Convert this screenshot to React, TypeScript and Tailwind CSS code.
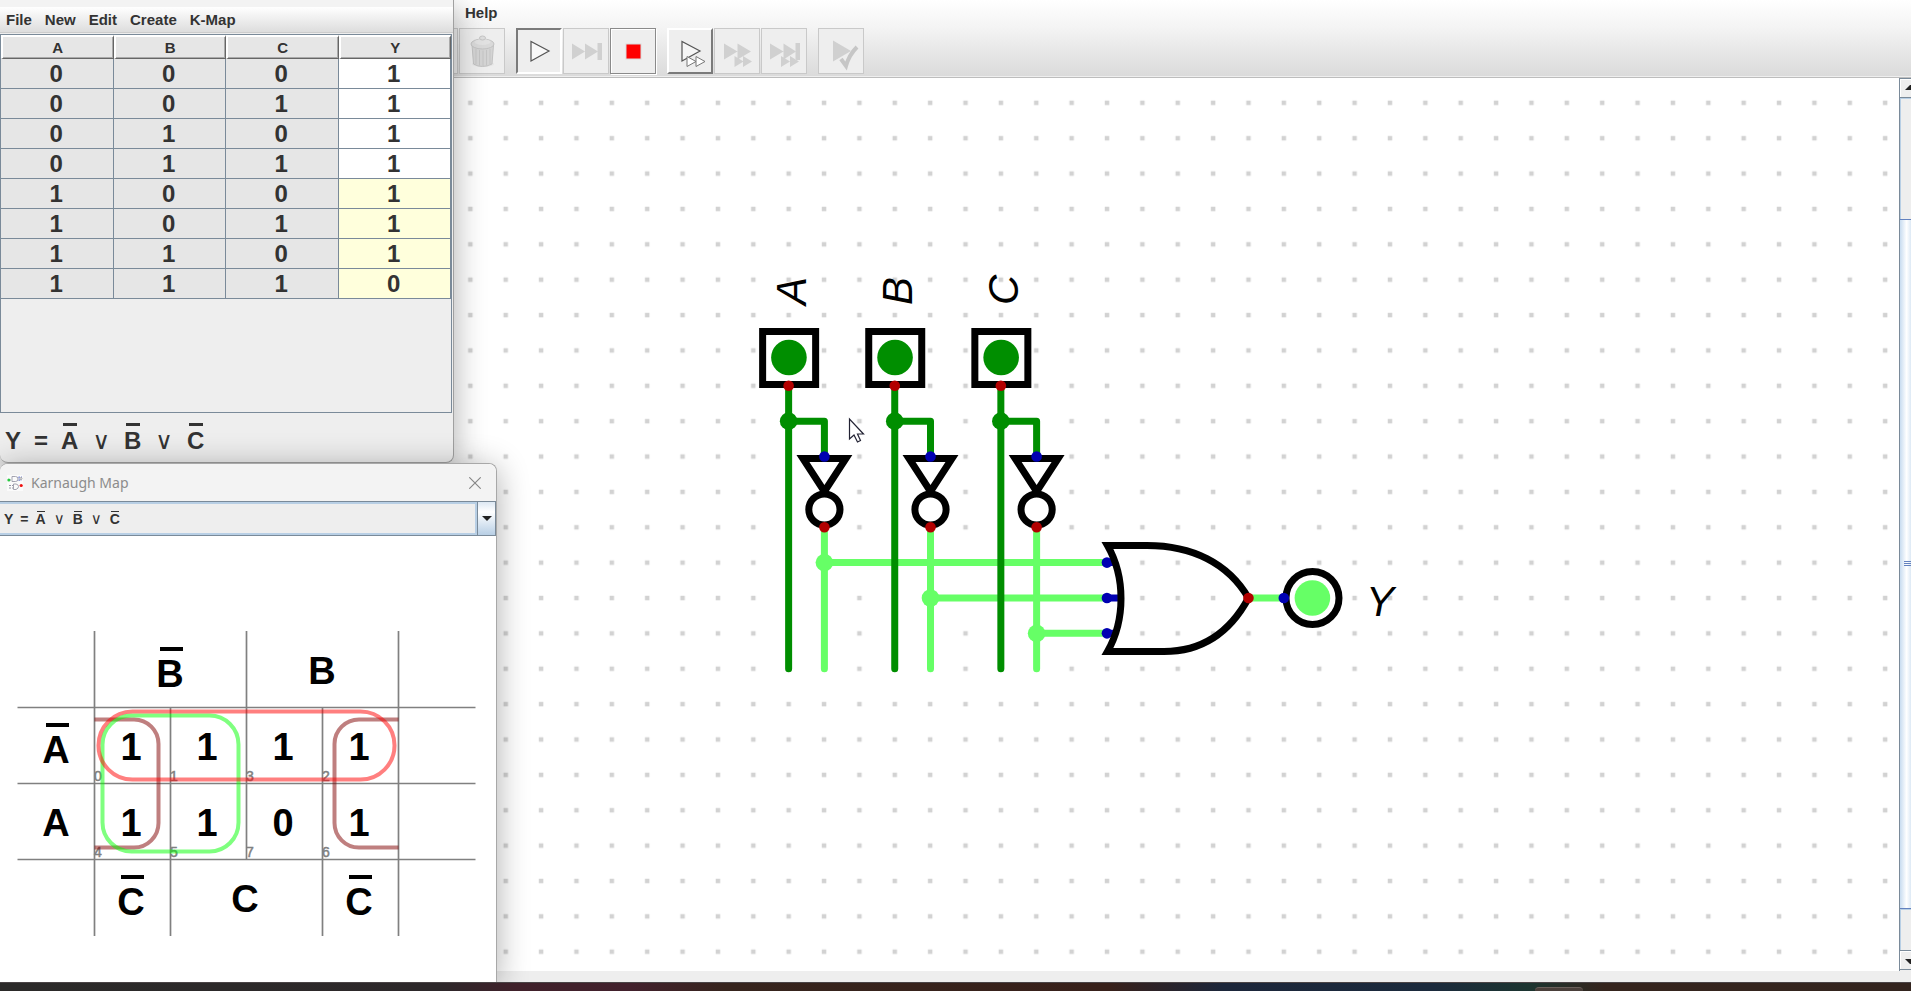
import type { ReactNode } from "react";

const SANS = "font-['Liberation_Sans',Arial,sans-serif]";

const COLUMNS = ["A", "B", "C", "Y"];

const ROWS = [
  [0, 0, 0, 1],
  [0, 0, 1, 1],
  [0, 1, 0, 1],
  [0, 1, 1, 1],
  [1, 0, 0, 1],
  [1, 0, 1, 1],
  [1, 1, 0, 1],
  [1, 1, 1, 0],
];

/* ---------- Toolbar ---------- */

type ToolKind = "flat" | "pressed" | "raised" | "framed";

const TOOL_STYLES: Record<ToolKind, string> = {
  flat: "border border-[#c9c9c9]",
  pressed: "border-2 border-t-[#7a7a7a] border-l-[#7a7a7a] border-r-white border-b-white",
  raised: "border-2 border-t-white border-l-white border-r-[#7a7a7a] border-b-[#7a7a7a]",
  framed: "border border-[#8a8a8a] shadow-[1px_1px_0_#ffffff,inset_1px_1px_0_#ffffff]",
};

function Tool({ label, kind = "flat", children }: { label: string; kind?: ToolKind; children?: ReactNode }) {
  return (
    <button
      type="button"
      aria-label={label}
      className={`flex size-[46px] shrink-0 items-center justify-center bg-[#eeeeee] ${TOOL_STYLES[kind]}`}
    >
      <svg viewBox="0 0 42 42" className="size-[42px] shrink-0" aria-hidden="true">
        {children}
      </svg>
    </button>
  );
}

const GRAY = "#d0d0d0";

function TrashIcon() {
  return (
    <g>
      <ellipse cx="22" cy="34" rx="11" ry="3" fill="#e4e4e4" />
      <path d="M11 15 L12.5 34 Q21 39 31 34 L32.500 15 Z" fill="#d4d4d4" stroke="#c2c2c2" strokeWidth="1" />
      <path d="M15 19V34M18.500 20V35.500M22 20.500V36M25.500 20V35.500M29 19V34" stroke="#c4c4c4" strokeWidth="1" />
      <ellipse cx="21.500" cy="14" rx="11.500" ry="5" fill="#d9d9d9" stroke="#c2c2c2" strokeWidth="1" />
      <ellipse cx="21.500" cy="12" rx="8" ry="3" fill="#e2e2e2" />
      <ellipse cx="21.500" cy="8" rx="3" ry="2" fill="#dedede" stroke="#c4c4c4" strokeWidth="1" />
    </g>
  );
}

/* ---------- Truth table window ---------- */

function Bar({ children, small }: { children: string; small?: boolean }) {
  return (
    <span className={`flex flex-col items-center ${small ? "gap-0.5" : "gap-1.5"}`}>
      <span className={small ? "h-px w-2 bg-[#333333]" : "h-[3px] w-3.5 bg-[#333333]"} />
      <span>{children}</span>
    </span>
  );
}

function Formula({ small }: { small?: boolean }) {
  const or = (
    <span className={`font-['DejaVu_Sans',sans-serif] font-normal ${small ? "text-[15px] leading-[11px]" : "text-2xl leading-[18px]"}`}>
      ∨
    </span>
  );
  return (
    <span
      className={`flex items-end font-bold text-[#333333] ${
        small ? "gap-2 text-sm leading-[11px]" : "gap-3.5 text-2xl leading-[18px]"
      }`}
    >
      <span className={`flex items-end ${small ? "gap-[7px]" : "gap-[13px]"}`}>
        <span>Y</span>
        <span>=</span>
        <Bar small={small}>A</Bar>
      </span>
      {or}
      <Bar small={small}>B</Bar>
      {or}
      <Bar small={small}>C</Bar>
    </span>
  );
}

function TruthTableWindow() {
  return (
    <section
      aria-label="Table"
      className="absolute top-0 left-0 flex h-[463px] w-[454px] flex-col rounded-b-lg border-r border-b border-[#a0a0a0] bg-[#eeeeee] shadow-[0_8px_32px_rgba(0,0,0,0.32)]"
    >
      <div className="h-[7px] bg-[#f3f3f3]" />
      <nav className="flex h-[26px] items-center gap-[13px] border-b border-[#cccccc] bg-linear-to-b from-white to-[#dddddd] pt-0.5 pl-1.5 text-[15px] font-bold text-[#333333]">
        {["File", "New", "Edit", "Create", "K-Map"].map((item) => (
          <button type="button" key={item}>
            {item}
          </button>
        ))}
      </nav>
      <div className="mt-px mr-px h-[379px] border border-[#7a8a99]">
        <table className="w-full table-fixed border-separate border-spacing-0 text-center font-bold text-[#333333]">
          <thead>
            <tr>
              {COLUMNS.map((c) => (
                <th
                  key={c}
                  className="h-6 border-t-2 border-r border-b border-l-2 border-t-white border-r-[#666666] border-b-[#666666] border-l-white bg-[#e6e6e6] p-0 text-[15px] leading-5 shadow-[inset_-1px_-1px_0_#aaaaaa]"
                >
                  {c}
                </th>
              ))}
            </tr>
          </thead>
          <tbody>
            {ROWS.map((row, r) => (
              <tr key={r}>
                {row.map((v, c) => (
                  <td
                    key={c}
                    className={`h-[30px] border-r border-b border-[#7a8a99] py-0 pr-px pl-0 text-2xl leading-7 ${
                      c < 3 ? "bg-[#e6e6e6]" : r < 4 ? "bg-white" : "bg-[#ffffdc]"
                    }`}
                  >
                    {v}
                  </td>
                ))}
              </tr>
            ))}
          </tbody>
        </table>
      </div>
      <div className="flex flex-1 items-end pb-3 pl-[5px]">
        <Formula />
      </div>
    </section>
  );
}

/* ---------- Karnaugh map window ---------- */

function KMapLabel({ x, y, children, bar }: { x: number; y: number; children: string; bar?: boolean }) {
  return (
    <g>
      {bar && <rect x={x - 10} y={y - 40} width="23" height="4" />}
      <text x={x} y={y} textAnchor="middle" fontSize="38" fontWeight="bold">
        {children}
      </text>
    </g>
  );
}

const CELLS = [
  ["1", "1", "1", "1"],
  ["1", "1", "0", "1"],
];
const CELL_INDEX = [
  ["0", "1", "3", "2"],
  ["4", "5", "7", "6"],
];

function KarnaughDrawing() {
  return (
    <svg className={`block h-[440px] w-[490px] ${SANS}`} viewBox="0 536 490 440" role="img" aria-label="Karnaugh map">
      <path
        d="M94.500 631V936M398.500 631V936M246.500 631V859.500M170.500 707.500V936M322.500 707.500V936M17.500 707.500H475.500M17.500 783.500H475.500M17.500 859.500H475.500"
        stroke="#808080"
        strokeWidth="1.700"
        fill="none"
      />
      {CELLS.map((row, r) =>
        row.map((v, c) => (
          <g key={`${r}${c}`}>
            <text x={131 + c * 76} y={760 + r * 76} textAnchor="middle" fontSize="38" fontWeight="bold">
              {v}
            </text>
            <text x={94 + c * 76} y={781 + r * 76} fontSize="14" fill="#808080" stroke="#808080" strokeWidth="0.500">
              {CELL_INDEX[r][c]}
            </text>
          </g>
        )),
      )}
      <KMapLabel x={170} y={687} bar>B</KMapLabel>
      <KMapLabel x={322} y={684}>B</KMapLabel>
      <KMapLabel x={56} y={763} bar>A</KMapLabel>
      <KMapLabel x={56} y={836}>A</KMapLabel>
      <KMapLabel x={131} y={915} bar>C</KMapLabel>
      <KMapLabel x={245} y={912}>C</KMapLabel>
      <KMapLabel x={359} y={915} bar>C</KMapLabel>
      <g fill="none" strokeWidth="4">
        <path
          d="M94.500 719.500H134A24.500 24.500 0 0 1 158.500 744V823A24.500 24.500 0 0 1 134 847.500H94.500M398.500 719.500H359A24.500 24.500 0 0 0 334.500 744V823A24.500 24.500 0 0 0 359 847.500H398.500"
          stroke="#800000"
          strokeOpacity="0.5"
        />
        <rect x="102.500" y="715.500" width="136" height="136" rx="29" stroke="#00ff00" strokeOpacity="0.5" />
        <rect x="98.500" y="711.500" width="296" height="68" rx="34" stroke="#ff0000" strokeOpacity="0.5" />
      </g>
    </svg>
  );
}

function AppIcon() {
  return (
    <svg viewBox="0 0 16 16" className="size-4" fill="none" aria-hidden="true">
      <rect width="16" height="16" fill="#fbfbfb" />
      <path d="M5 1.500H8.500Q11 1.500 11 4T8.500 6.500H5ZM6.500 9H9Q11.500 9.500 11.500 11.500T9 14.500H6.500Z" stroke="#9a9aa8" strokeWidth="0.900" />
      <path d="M2 5H5M2 10.500H6M2 13H6" stroke="#8a8a9a" strokeWidth="0.900" strokeDasharray="2 1" />
      <path d="M11.500 2H15M12 5H15M12 2V7" stroke="#6a78d0" strokeWidth="0.900" strokeDasharray="1.500 1" />
      <circle cx="1.800" cy="5" r="1.500" fill="#28c840" />
      <circle cx="14.200" cy="10.500" r="1.600" fill="#ee1010" />
      <circle cx="14" cy="3.500" r="1" stroke="#888" strokeWidth="0.700" />
    </svg>
  );
}

function KarnaughWindow() {
  return (
    <section
      aria-label="Karnaugh Map"
      className="absolute top-[463px] bottom-0 left-0 flex w-[497px] flex-col overflow-visible rounded-t-lg border-t border-r border-[#a8a8a8] bg-white shadow-[0_4px_32px_rgba(0,0,0,0.32)]"
    >
      <header className="flex h-[37px] shrink-0 items-center gap-2 rounded-t-lg bg-[#f3f3f3] pr-[15px] pl-[7px]">
        <AppIcon />
        <h1 className="flex-1 font-['Noto_Sans','Open_Sans',sans-serif] text-sm text-[#8c8c8c]">Karnaugh Map</h1>
        <button type="button" aria-label="Close">
          <svg viewBox="0 0 12 12" className="size-3" aria-hidden="true">
            <path d="M0.300 0.300L11.700 11.700M11.700 0.300L0.300 11.700" stroke="#858585" strokeWidth="1.100" />
          </svg>
        </button>
      </header>
      <div className="relative flex h-[35px] shrink-0 border-y border-r border-[#7a8a99] bg-[#eeeeee]">
        <label htmlFor="expression" className="pointer-events-none absolute bottom-[10px] left-1">
          <Formula small />
        </label>
        <select
          id="expression"
          className="min-w-0 flex-1 appearance-none border-2 border-l-0 border-[#b8cfe5] bg-transparent"
        >
          <option value="y" />
        </select>
        <span
          aria-hidden="true"
          className="pointer-events-none flex w-[18px] items-center justify-center border-l border-[#7a8a99] bg-linear-to-b from-[#dde8f3] via-white via-30% to-[#b8cfe5]"
        >
          <svg viewBox="0 0 10 5" className="h-[5px] w-2.5">
            <path d="M0 0H10L5 5Z" fill="#222222" />
          </svg>
        </span>
      </div>
      <KarnaughDrawing />
    </section>
  );
}

/* ---------- Circuit ---------- */

const GRID = 35.37;
const LEFT = 470.3;
const TOP = 24.8;
const gx = (n: number) => LEFT + n * GRID;
const gy = (n: number) => TOP + n * GRID;

const ON = "#66ff66";
const OFF = "#008e00";
const PIN_OUT = "#b20000";
const PIN_IN = "#0000b2";

const INPUTS = [
  { name: "A", col: 9, tap: 13 },
  { name: "B", col: 12, tap: 14 },
  { name: "C", col: 15, tap: 15 },
];

function Circuit() {
  return (
    <svg className={`block size-full ${SANS}`} role="img" aria-label="Circuit">
      <defs>
        <pattern
          id="grid"
          width={GRID}
          height={GRID}
          patternUnits="userSpaceOnUse"
          patternTransform={`translate(${LEFT - GRID / 2} ${TOP - GRID / 2})`}
        >
          <rect x={GRID / 2 - 2.2} y={GRID / 2 - 2.2} width="4.500" height="4.500" fill="#d2d2d2" />
        </pattern>
      </defs>
      <rect width="100%" height="100%" fill="url(#grid)" />

      <g fill="none" strokeWidth="7" strokeLinecap="round" strokeLinejoin="round">
        {INPUTS.map(({ name, col, tap }) => (
          <path
            key={name}
            stroke={ON}
            d={`M${gx(col + 1) + 0.4} ${gy(12)}V${gy(16)}M${gx(col + 1)} ${gy(tap)}H${gx(18)}`}
          />
        ))}
        <path stroke={ON} d={`M${gx(22)} ${gy(14)}H${gx(23)}`} />
        {INPUTS.map(({ name, col }) => (
          <path
            key={name}
            stroke={OFF}
            d={`M${gx(col)} ${gy(8)}V${gy(16)}M${gx(col)} ${gy(9)}H${gx(col + 1) + 0.4}V${gy(10)}`}
          />
        ))}
      </g>

      {INPUTS.map(({ name, col, tap }) => {
        const x = gx(col);
        const n = gx(col + 1) + 0.4;
        return (
          <g key={name}>
            <circle cx={x} cy={gy(9)} r="8.800" fill={OFF} />
            <circle cx={n} cy={gy(tap)} r="8.800" fill={ON} />
            <rect x={x - 26} y="253.500" width="53" height="53" fill="none" stroke="#000" strokeWidth="7" />
            <circle cx={x + 0.3} cy="279.500" r="17.800" fill={OFF} />
            <circle cx={x} cy={gy(8)} r="5.300" fill={PIN_OUT} />
            <path
              d={`M${n - 21.5} 380.500H${n + 21.5}L${n} 413.500Z`}
              fill="none"
              stroke="#000"
              strokeWidth="7"
              strokeLinejoin="miter"
            />
            <circle cx={n} cy="431.500" r="15.600" fill="#fff" stroke="#000" strokeWidth="7" />
            <circle cx={n} cy={gy(10)} r="5.300" fill={PIN_IN} />
            <circle cx={n} cy={gy(12)} r="5.300" fill={PIN_OUT} />
            <text transform={`translate(${x + 17.3} 227) rotate(-90)`} fontSize="42" fontStyle="italic">
              {name}
            </text>
          </g>
        );
      })}

      <g stroke={PIN_IN} strokeWidth="7">
        <path d={`M${gx(18)} ${gy(13)}h6M${gx(18)} ${gy(14)}h11M${gx(18)} ${gy(15)}h6`} />
      </g>
      <g fill={PIN_IN}>
        <circle cx={gx(18)} cy={gy(13)} r="5.300" />
        <circle cx={gx(18)} cy={gy(14)} r="5.300" />
        <circle cx={gx(18)} cy={gy(15)} r="5.300" />
      </g>
      <path
        d="M1107.500 467.500H1147C1192 467.500 1228 485 1248.500 520C1229 556 1200 573.500 1164 573.500H1107.500C1125.500 542 1125.500 499 1107.500 467.500Z"
        fill="none"
        stroke="#000"
        strokeWidth="7"
        strokeLinejoin="miter"
      />
      <circle cx={gx(22)} cy={gy(14)} r="5.300" fill={PIN_OUT} />
      <circle cx="1312.500" cy="520" r="26.500" fill="#fff" stroke="#000" strokeWidth="7" />
      <circle cx="1312.400" cy="520" r="17.800" fill={ON} />
      <circle cx={gx(23)} cy={gy(14)} r="5.300" fill={PIN_IN} />
      <text x="1366" y="538" fontSize="42" fontStyle="italic">
        Y
      </text>
      <path
        d="M849.500 341V361L854 357L857.500 364L860.500 362.500L857.500 356H863.500Z"
        fill="#fff"
        stroke="#222233"
        strokeWidth="1.200"
      />
    </svg>
  );
}

function ScrollBar() {
  return (
    <div aria-hidden="true" className="flex w-3 shrink-0 flex-col overflow-hidden border-l border-[#7a8a99] bg-[#eeeeee]">
      <div className="h-5 shrink-0 border-y border-[#7a8a99] bg-[#eeeeee] shadow-[inset_1px_1px_0_#ffffff]">
        <svg viewBox="0 0 11 18" className="h-[18px] w-[11px]">
          <path d="M5 11L10 6H11V11Z" fill="#222222" />
        </svg>
      </div>
      <div className="grow-[120] basis-0 border-t border-l border-[#b8cfe5]" />
      <div className="flex grow-[691] basis-0 items-center border-y border-[#6382bf] bg-linear-to-r from-[#c8dcf0] via-white via-60% to-[#dde9f5] pl-1 shadow-[-1px_0_0_#6382bf]">
        <div className="flex flex-1 flex-col gap-px">
          <span className="h-px bg-[#6382bf]" />
          <span className="h-px bg-[#6382bf]" />
          <span className="h-px bg-[#6382bf]" />
        </div>
      </div>
      <div className="grow-[40] basis-0 border-t border-l border-[#b8cfe5]" />
      <div className="h-5 shrink-0 border-y border-[#7a8a99] shadow-[inset_1px_1px_0_#ffffff]">
        <svg viewBox="0 0 11 18" className="h-[18px] w-[11px]">
          <path d="M5 8H11V13H10Z" fill="#222222" />
        </svg>
      </div>
      <div className="h-px shrink-0" />
    </div>
  );
}

function MainWindow() {
  return (
    <main className="flex min-h-0 flex-1 flex-col bg-white">
      <div className="flex h-[78px] shrink-0 flex-col border-b border-[#bdbdbd] bg-linear-to-b from-white via-[#f4f4f4] via-35% to-[#dadada]">
        <nav className="flex h-7 items-center pb-0.5 pl-[465px] text-[15px] font-bold text-[#333333]">
          <button type="button">Help</button>
        </nav>
        <div className="flex flex-1 items-start gap-[11px] border-b border-[#eeeeee] pl-[412px]">
          <div className="flex gap-px">
            <Tool label="Redo" />
            <Tool label="Delete">
              <TrashIcon />
            </Tool>
          </div>
          <div className="flex gap-px">
            <Tool label="Start simulation" kind="pressed">
              <path d="M13 11.500V31L31 21Z" fill="#f8f8f8" stroke="#555" strokeWidth="1.200" />
            </Tool>
            <Tool label="Single gate step">
              <path d="M7 13.500V29.500L20 21.500ZM20 13.500V29.500L33 21.500ZM32.500 13H37V30H32.500Z" fill={GRAY} />
            </Tool>
            <Tool label="Stop simulation" kind="framed">
              <rect x="13.500" y="13.500" width="16" height="16" fill="#d9d9d9" />
              <rect x="14.500" y="14.500" width="14" height="14" fill="#ff0000" />
            </Tool>
          </div>
          <div className="flex gap-px">
            <Tool label="Run fast" kind="raised">
              <path d="M13 11.500V31L31 21Z" fill="#f6f6f6" stroke="#555" strokeWidth="1.200" />
              <path d="M18 26.500V36.500L27 31.500ZM27 26.500V36.500L36 31.500Z" fill="#fff" stroke="#777" strokeWidth="1" />
            </Tool>
            <Tool label="Run to break">
              <path d="M8 13.500V29.500L21.500 21.500ZM21.500 13.500V29.500L35 21.500ZM18.500 26V37L27.500 31.500ZM27 26V37L36 31.500Z" fill={GRAY} />
            </Tool>
            <Tool label="Run to end">
              <path d="M7 13.500V29.500L20.500 21.500ZM20.500 13.500V29.500L33 21.500ZM32.500 13H37V30H32.500ZM18 26V37L27 31.500ZM27 26V37L36 31.500Z" fill={GRAY} />
            </Tool>
          </div>
          <Tool label="Run tests">
            <path d="M13 10.500V31.500L31 21Z" fill={GRAY} />
            <path d="M21 29L26 36Q29 25 37 17" fill="none" stroke="#c6c6c6" strokeWidth="4" />
          </Tool>
        </div>
      </div>
      <div className="flex min-h-0 flex-1">
        <div className="min-w-0 flex-1 overflow-hidden">
          <Circuit />
        </div>
        <ScrollBar />
      </div>
      <div className="h-[11px] shrink-0 bg-[#eeeeee]" />
    </main>
  );
}

export default function App() {
  return (
    <div className={`flex h-screen flex-col overflow-hidden ${SANS}`}>
      <div className="relative flex min-h-0 flex-1 flex-col overflow-hidden">
        <MainWindow />
        <TruthTableWindow />
        <KarnaughWindow />
      </div>
      <footer className="flex h-[9px] shrink-0 border-t border-[#4a4446] bg-[linear-gradient(90deg,#2b2a29_0%,#2d282a_23%,#40202a_27%,#42202c_33%,#36241d_38%,#38201a_58%,#1c263a_64%,#1b2a3c_75%,#1c3530_80%,#35241d_84%,#33241e_100%)]">
        <div className="ml-[80%] pt-1 pl-1.5">
          <div className="h-1 w-12 rounded-t border-t border-[#6a5f5a] bg-[#4a3f3a]" />
        </div>
      </footer>
    </div>
  );
}
